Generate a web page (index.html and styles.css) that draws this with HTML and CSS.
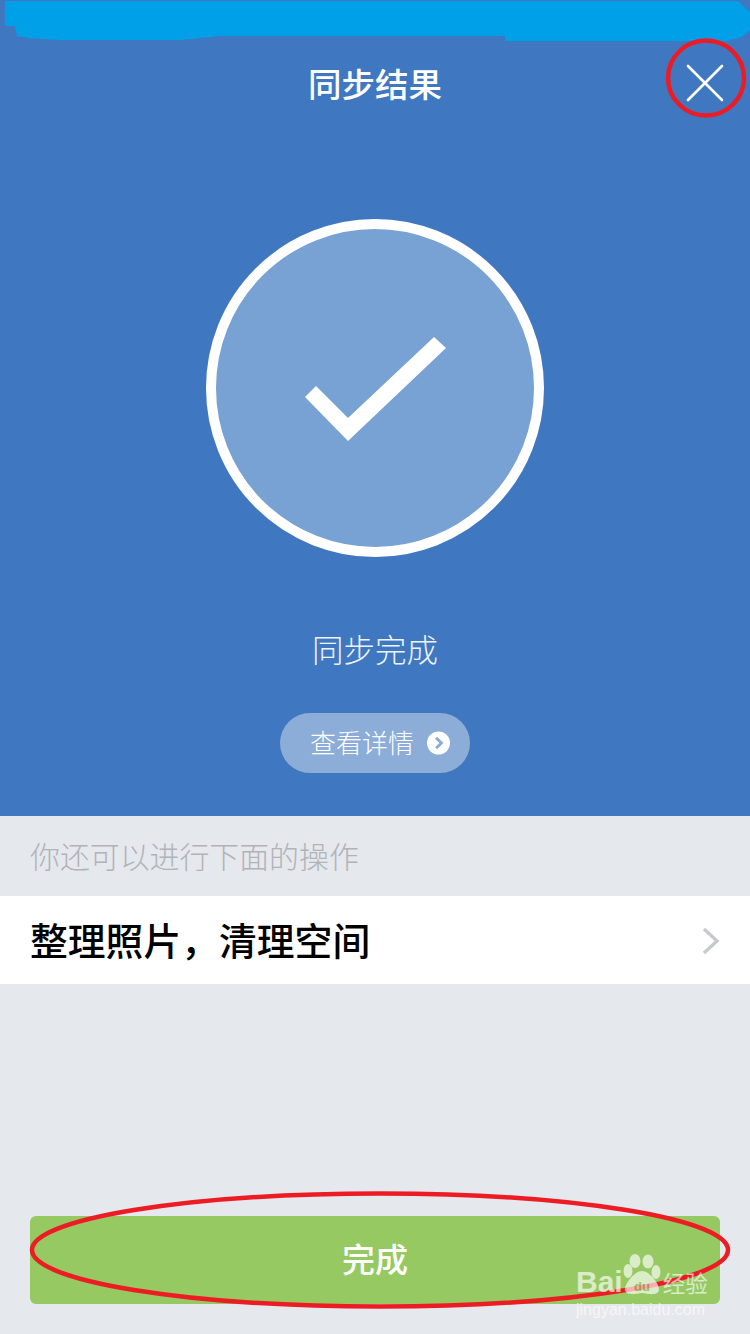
FILE: index.html
```html
<!DOCTYPE html>
<html lang="zh-CN">
<head>
    <meta charset="UTF-8">
    <meta name="viewport" content="width=device-width, initial-scale=1.0">
    <title>同步结果</title>
    <link rel="stylesheet" href="styles.css">
</head>
<body>
    <div class="page">
        <!-- Blue result panel -->
        <section class="hero">
            <header class="title-bar">
                <h1 class="title">同步结果</h1>
                <button class="close-btn" aria-label="关闭">
                    <svg width="38" height="38" viewBox="0 0 38 38">
                        <path d="M2 2L36 36M36 2L2 36" stroke="#fff" stroke-width="2.6" stroke-linecap="round"/>
                    </svg>
                </button>
            </header>
            <div class="result-circle">
                <svg class="check" width="141" height="104" viewBox="0 0 141 104">
                    <polygon points="129,0 141,11 43,104 0,60 11,49 43,81" fill="#fff"/>
                </svg>
            </div>
            <p class="result-text">同步完成</p>
            <a class="details-btn">
                <span>查看详情</span>
                <svg width="24" height="24" viewBox="0 0 24 24">
                    <circle cx="12" cy="12" r="12" fill="#fff"/>
                    <path d="M9.5 6.5L15 12L9.5 17.5" fill="none" stroke="#8cadd7" stroke-width="3"/>
                </svg>
            </a>
        </section>

        <!-- Follow-up actions -->
        <p class="section-label">你还可以进行下面的操作</p>
        <div class="action-row">
            <span>整理照片，清理空间</span>
            <svg class="chevron" width="18" height="28" viewBox="0 0 18 28">
                <path d="M2 2L15 14L2 26" fill="none" stroke="#c7c9ce" stroke-width="3.4"/>
            </svg>
        </div>

        <footer class="footer">
            <button class="done-btn">完成</button>
        </footer>

        <!-- Marks drawn on top of the screenshot -->
        <svg class="marks" width="750" height="1334" viewBox="0 0 750 1334">
            <path d="M5 1H738L750 12V30L742 37L727 41H505V36H220L180 40H57L29 38L17 36L15 26H5Z" fill="#00a0e9"/>
            <ellipse cx="706" cy="78" rx="38" ry="37.5" fill="none" stroke="#ed1c24" stroke-width="4.5"/>
            <ellipse cx="380" cy="1250" rx="348" ry="56.5" fill="none" stroke="#ed1c24" stroke-width="4.5"/>
        </svg>

        <div class="watermark">
            <div class="wm-logo">
                <span class="wm-bai">Bai</span>
                <svg class="wm-paw" width="40" height="42" viewBox="0 0 40 42">
                    <ellipse cx="6" cy="17" rx="4.5" ry="7" fill="#fff"/>
                    <ellipse cx="13" cy="7" rx="5.5" ry="7" fill="#fff"/>
                    <ellipse cx="26" cy="7.5" rx="5.5" ry="7" fill="#fff"/>
                    <ellipse cx="34" cy="18" rx="4.5" ry="7" fill="#fff"/>
                    <path d="M20 17C28 17 38 31 37 36C36 42 26 40 20 39C14 40 4 42 3 36C2 31 12 17 20 17Z" fill="#fff"/>
                    <text x="20" y="37" text-anchor="middle" class="wm-du">du</text>
                </svg>
                <span class="wm-cn">经验</span>
            </div>
            <div class="wm-url">jingyan.baidu.com</div>
        </div>
    </div>
</body>
</html>
```

FILE: styles.css
```css
* {
    box-sizing: border-box;
}
body {
    font-family: "Noto Sans CJK SC", "Noto Sans", sans-serif;
    margin: 0;
    padding: 0;
    background-color: #e5e8ed;
}
.page {
    position: relative;
    width: 750px;
    height: 1334px;
    display: flex;
    flex-direction: column;
    overflow: hidden;
}
.hero {
    height: 816px;
    background-color: #3f78c0;
    color: white;
    display: flex;
    flex-direction: column;
    align-items: center;
    padding-top: 40px;
}
.title-bar {
    position: relative;
    width: 100%;
    height: 90px;
    display: flex;
    align-items: center;
    justify-content: center;
}
.title {
    margin: -4px 0 0;
    font-size: 33.5px;
    font-weight: 500;
    line-height: 86px;
}
.close-btn {
    position: absolute;
    top: 24px;
    right: 26px;
    width: 38px;
    height: 38px;
    padding: 0;
    background: none;
    border: none;
    cursor: pointer;
}
.result-circle {
    width: 338px;
    height: 338px;
    margin-top: 89px;
    border: 10px solid white;
    border-radius: 50%;
    background-color: #78a1d4;
    display: flex;
    align-items: center;
    justify-content: center;
}
.check {
    margin-top: 1px;
}
.result-text {
    margin: 68px 0 0;
    font-size: 31.5px;
    font-weight: 300;
    line-height: 46px;
    color: #eef3fa;
}
.details-btn {
    display: flex;
    align-items: center;
    gap: 13px;
    width: 190px;
    height: 60px;
    margin-top: 42px;
    padding: 0 20px 0 30px;
    border-radius: 30px;
    background-color: #8cadd7;
    font-size: 26px;
    font-weight: 300;
    white-space: nowrap;
}
.details-btn span {
    margin-top: -4px;
}
.details-btn svg {
    margin-top: -1px;
}
.section-label {
    margin: 0;
    height: 80px;
    padding-left: 30px;
    font-size: 29.9px;
    font-weight: 300;
    line-height: 78px;
    color: #b1b3b8;
}
.action-row {
    height: 88px;
    padding: 0 30px;
    background-color: white;
    display: flex;
    align-items: center;
    justify-content: space-between;
    font-size: 37.8px;
    font-weight: 500;
    color: #000;
}
.action-row span {
    margin-top: -3px;
}
.chevron {
    margin-top: 2px;
}
.footer {
    margin-top: auto;
    padding: 0 30px 30px;
}
.done-btn {
    display: block;
    width: 100%;
    height: 88px;
    padding: 0 0 4px;
    border: none;
    border-radius: 6px;
    background-color: #96c962;
    color: white;
    font-family: inherit;
    font-size: 33px;
    font-weight: 500;
    cursor: pointer;
}
.marks {
    position: absolute;
    top: 0;
    left: 0;
    pointer-events: none;
}
.watermark {
    position: absolute;
    top: 1254px;
    left: 576px;
    width: 135px;
    color: white;
    opacity: 0.65;
}
.wm-logo {
    display: flex;
    align-items: flex-end;
    height: 44px;
    font-family: "Liberation Sans", sans-serif;
    font-weight: 700;
}
.wm-bai {
    font-size: 30px;
    line-height: 36px;
    margin-bottom: -2px;
}
.wm-paw {
    flex: none;
    margin-bottom: 2px;
    margin-left: -1px;
}
.wm-du {
    font-size: 13px;
    fill: #96c962;
}
.wm-cn {
    margin-left: 1px;
    font-family: "Noto Sans CJK SC", sans-serif;
    font-size: 22.5px;
    font-weight: 400;
    line-height: 32px;
    white-space: nowrap;
}
.wm-url {
    margin-top: 2px;
    font-family: "Liberation Sans", sans-serif;
    font-size: 16px;
    line-height: 20px;
    white-space: nowrap;
}
```
